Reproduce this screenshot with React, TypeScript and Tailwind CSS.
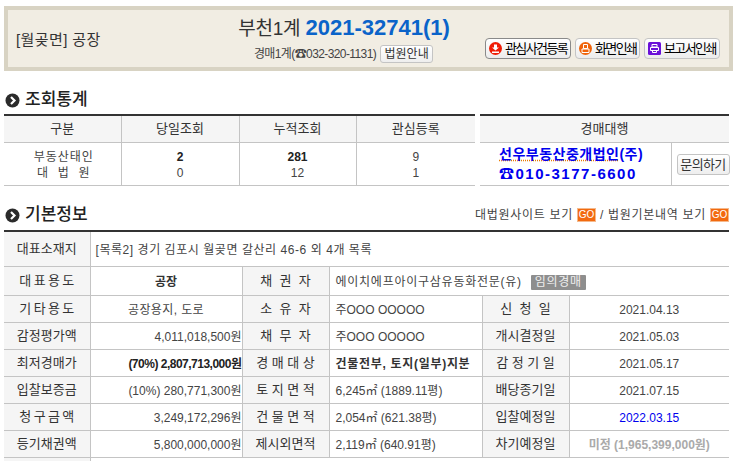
const font = { fontFamily: '"Liberation Sans","Noto Sans CJK KR",sans-serif' };

function Bullet() {
  return (
    <svg width="15" height="15" viewBox="0 0 15 15" className="shrink-0">
      <circle cx="7.5" cy="7.5" r="7" fill="#2b2b2b" />
      <path d="M6 4l3.5 3.5L6 11" fill="none" stroke="#fff" strokeWidth="2.2" />
    </svg>
  );
}

function Go() {
  return (
    <span className="inline-flex w-[19px] h-[14px] items-center justify-center bg-[#f26a0f] text-white text-[10px] tracking-normal leading-none border border-[#f5b98c]">GO</span>
  );
}

function Btn({ icon, label, dark, w }: { icon: React.ReactNode; label: string; dark?: boolean; w: string }) {
  return (
    <span className={`inline-flex items-center h-[21px] pl-[3px] gap-[3px] rounded-[4px] bg-gradient-to-b from-white to-[#ececec] border text-[13px] tracking-[-1.6px] text-black ${w} ${dark ? 'border-[#8a8a8a]' : 'border-[#c4c4c4]'}`}>
      {icon}
      {label}
    </span>
  );
}

const th = 'bg-[#f5f5f5] border border-[#c4c4c4] text-center font-normal text-[#333] text-[13px] p-0 whitespace-pre';
const td = 'border border-[#c4c4c4] text-[12px] p-0 pt-[2px] whitespace-nowrap';

function Row({ a, b, c, d, e, f, bBold, dBold, fClass }: { a: string; b: string; c: string; d: string; e: string; f: string; bBold?: boolean; dBold?: boolean; fClass?: string }) {
  return (
    <tr className="h-[27px]">
      <th className={`${th} border-l-0 [word-spacing:-1.3px]`}>{a}</th>
      <td className={`${td} text-right ${bBold ? 'font-bold text-[#222] tracking-[-0.5px]' : ''}`}>{b}</td>
      <th className={th}>{c}</th>
      <td className={`${td} pl-[6px] ${dBold ? 'font-bold text-[#333] tracking-[0.7px]' : ''}`}>{d}</td>
      <th className={th}>{e}</th>
      <td className={`${td} border-r-0 text-center ${fClass ?? ''}`}>{f}</td>
    </tr>
  );
}

export default function App() {
  return (
    <div style={font} className="w-[738px] h-[461px] overflow-hidden bg-white text-[#333]">
      <header className="mt-[6px] ml-[4px] w-[729px] h-[65px] border-[4px] border-[#d8d3c3] bg-[#f1ede3] flex">
        <div className="w-[202px] pl-[8px] pt-[20px] text-[15px] tracking-[0.4px] leading-[20px] text-[#333]">[월곶면] 공장</div>
        <div className="w-[268px] flex flex-col items-center">
          <div className="flex items-baseline h-[34px] pt-[3px] leading-[30px] whitespace-nowrap">
            <span className="text-[19px] tracking-[-0.2px] text-[#333]">부천1계&nbsp;</span>
            <span className="text-[22px] font-bold text-[#0a63c9]">2021-32741(1)</span>
          </div>
          <div className="ml-[-1px] mt-[1px] flex items-center text-[12px] tracking-[-0.6px] text-[#444] whitespace-nowrap">
            경매1계(☎032-320-1131)
            <span className="ml-[4px] inline-flex items-center justify-center h-[18px] w-[53px] rounded-[3px] border border-[#c4c4c4] bg-gradient-to-b from-white to-[#eeeeee] text-[12px] tracking-normal text-[#333]">법원안내</span>
          </div>
        </div>
        <div className="ml-[7px] mt-[28px] flex gap-[4px]">
          <Btn dark w="w-[86px]" label="관심사건등록" icon={
            <svg width="13" height="13" viewBox="0 0 13 13" className="shrink-0"><circle cx="6.5" cy="6.5" r="6.5" fill="#f01d06" /><path d="M5 2.500h3v3h2l-3.500 3-3.500-3h2zM3 9.500h7v1.500H3z" fill="#fff" /></svg>
          } />
          <Btn w="w-[65px]" label="화면인쇄" icon={
            <svg width="13" height="13" viewBox="0 0 13 13" className="shrink-0"><circle cx="6.500" cy="6.500" r="6.500" fill="#f0640a" /><path d="M4.500 2.500h4v4h-4zM3 7h7v3.500H3z" fill="none" stroke="#fff" /></svg>
          } />
          <Btn w="w-[76px]" label="보고서인쇄" icon={
            <svg width="13" height="13" viewBox="0 0 13 13" className="shrink-0"><rect width="13" height="13" rx="1.500" fill="#6a10d8" /><path d="M4 2.500h5v2.500H4zM2.500 5.500h8v3h-8zM4.500 8.500h4v2h-4z" fill="none" stroke="#fff" /></svg>
          } />
        </div>
      </header>

      <div className="ml-[5px] mt-[20px] h-[18px] flex items-center gap-[5px]">
        <Bullet />
        <h2 className="text-[17px] font-medium leading-[18px] text-[#222]">조회통계</h2>
      </div>

      <div className="ml-[4px] mt-[5px] w-[725px] flex gap-[5px]">
        <table className="w-[471px] table-fixed border-collapse border-t-[2px] border-t-[#333] text-center text-[#444]">
          <colgroup>
            <col className="w-[117px]" /><col className="w-[118px]" /><col className="w-[117px]" /><col />
          </colgroup>
          <thead>
            <tr className="h-[27px]">
              <th className={`${th} border-t-0 border-l-0`}>구분</th>
              <th className={`${th} border-t-0`}>당일조회</th>
              <th className={`${th} border-t-0`}>누적조회</th>
              <th className={`${th} border-t-0 border-r-0`}>관심등록</th>
            </tr>
          </thead>
          <tbody>
            <tr className="h-[43px] leading-[16px]">
              <td className={`${td} border-l-0 pl-[3px] text-center`}><span className="tracking-[1px]">부동산태인</span><br /><span className="whitespace-pre tracking-[1px]">대  법  원</span></td>
              <td className={`${td} text-center`}><b className="text-[#222]">2</b><br />0</td>
              <td className={`${td} text-center`}><b className="text-[#222]">281</b><br />12</td>
              <td className={`${td} border-r-0 text-center`}>9<br />1</td>
            </tr>
          </tbody>
        </table>
        <table className="w-[249px] table-fixed border-collapse border-t-[2px] border-t-[#333]">
          <colgroup><col className="w-[191px]" /><col /></colgroup>
          <thead>
            <tr className="h-[27px]"><th colSpan={2} className={`${th} border-t-0 border-x-0`}>경매대행</th></tr>
          </thead>
          <tbody>
            <tr className="h-[43px]">
              <td className={`${td} border-l-0 pl-[19px] text-[#0000ee] text-[14px] font-bold leading-[19px]`}>
                <span className="tracking-[0.5px] underline decoration-dotted decoration-[#ea7a00]">선우부동산중개법인</span><span className="tracking-[0.5px]">(주)</span><br />
                <span className="tracking-[1.5px] text-[15px]">☎010-3177-6600</span>
              </td>
              <td className={`${td} border-r-0 pl-[5px]`}>
                <span className="inline-flex items-center justify-center w-[53px] h-[21px] rounded-[3px] border border-[#c4c4c4] bg-gradient-to-b from-white to-[#eeeeee] text-[13px] tracking-[-0.6px] text-[#333]">문의하기</span>
              </td>
            </tr>
          </tbody>
        </table>
      </div>

      <div className="ml-[5px] mt-[20px] w-[724px] h-[19px] flex items-center gap-[5px]">
        <Bullet />
        <h2 className="text-[17px] font-medium leading-[18px] text-[#222]">기본정보</h2>
        <div className="ml-auto flex items-center gap-[4px] text-[12px] tracking-[0.7px] text-[#444]">
          대법원사이트 보기 <Go /> / 법원기본내역 보기 <Go />
        </div>
      </div>

      <table className="ml-[4px] mt-[5px] w-[725px] table-fixed border-collapse border-t-[2px] border-t-[#333] text-[#444]">
        <colgroup>
          <col className="w-[86px]" /><col className="w-[152px]" /><col className="w-[87px]" /><col className="w-[153px]" /><col className="w-[87px]" /><col />
        </colgroup>
        <tbody>
          <tr className="h-[36px]">
            <th className={`${th} border-t-0 border-l-0`}>대표소재지</th>
            <td colSpan={5} className={`${td} border-t-0 border-r-0 pl-[5px] tracking-[0.55px]`}>[목록2] 경기 김포시 월곶면 갈산리 46-6 외 4개 목록</td>
          </tr>
          <tr className="h-[29px]">
            <th className={`${th} border-l-0 [word-spacing:-1.3px]`}>대 표 용 도</th>
            <td className={`${td} text-center font-bold text-[#333]`}>공장</td>
            <th className={th}>채  권  자</th>
            <td colSpan={3} className={`${td} border-r-0 pl-[6px] tracking-[0.75px]`}>
              에이치에프아이구삼유동화전문(유)
              <span className="ml-[9px] inline-block w-[55px] text-center h-[15px] leading-[15px] bg-[#8e8e8e] text-[#eee] rounded-[1px]">임의경매</span>
            </td>
          </tr>
          <tr className="h-[27px]">
            <th className={`${th} border-l-0 [word-spacing:-1.3px]`}>기 타 용 도</th>
            <td className={`${td} text-center tracking-[0.4px]`}>공장용지, 도로</td>
            <th className={th}>소  유  자</th>
            <td className={`${td} pl-[6px]`}>주OOO OOOOO</td>
            <th className={th}>신  청  일</th>
            <td className={`${td} border-r-0 text-center`}>2021.04.13</td>
          </tr>
          <Row a="감정평가액" b="4,011,018,500원" c="채  무  자" d="주OOO OOOOO" e="개시결정일" f="2021.05.03" />
          <Row a="최저경매가" bBold b="(70%) 2,807,713,000원" c="경 매 대 상" dBold d="건물전부, 토지(일부)지분" e="감 정 기 일" f="2021.05.17" />
          <Row a="입찰보증금" b="(10%) 280,771,300원" c="토 지 면 적" d="6,245㎡ (1889.11평)" e="배당종기일" f="2021.07.15" />
          <Row a="청 구 금 액" b="3,249,172,296원" c="건 물 면 적" d="2,054㎡ (621.38평)" e="입찰예정일" f="2022.03.15" fClass="text-[#0000ee]" />
          <Row a="등기채권액" b="5,800,000,000원" c="제시외면적" d="2,119㎡ (640.91평)" e="차기예정일" f="미정 (1,965,399,000원)" fClass="font-bold text-[#aaa]" />
          <tr className="h-[27px]"><th className={`${th} border-l-0`}></th><td colSpan={5} className={`${td} border-r-0`}></td></tr>
        </tbody>
      </table>
    </div>
  );
}
